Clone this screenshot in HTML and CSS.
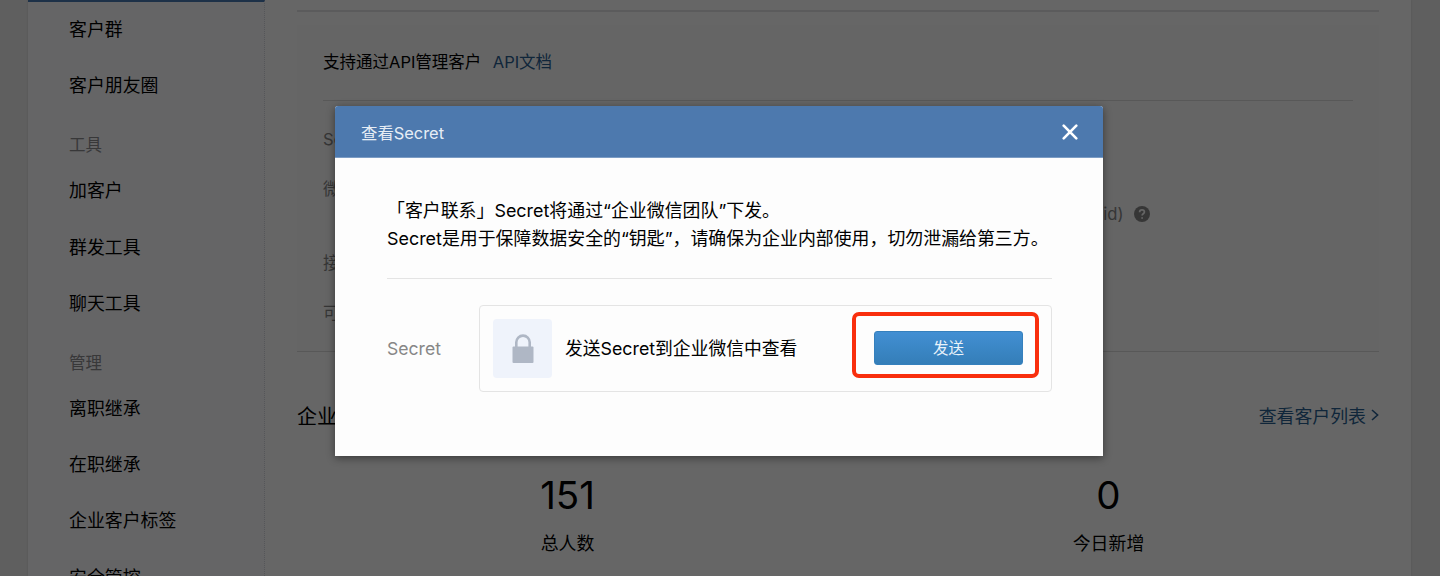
FILE: index.html
```html
<!DOCTYPE html>
<html lang="zh-CN">
<head>
<meta charset="utf-8">
<title>查看Secret</title>
<link rel="stylesheet" href="styles.css">
</head>
<body>
<div class="page">
  <nav class="sidebar">
    <a class="item">客户群</a>
    <a class="item">客户朋友圈</a>
    <h3 class="group">工具</h3>
    <a class="item">加客户</a>
    <a class="item">群发工具</a>
    <a class="item">聊天工具</a>
    <h3 class="group">管理</h3>
    <a class="item">离职继承</a>
    <a class="item">在职继承</a>
    <a class="item">企业客户标签</a>
    <a class="item">安全管控</a>
  </nav>
  <main class="main">
    <section class="panel">
      <div class="panel-head">支持通过API管理客户<a class="link">API文档</a></div>
      <div class="row">Se</div>
      <div class="row row-wechat">微
        <span class="uid">uid)
          <svg class="help" viewBox="0 0 16 16"><circle cx="8" cy="8" r="8"/><path d="M5.6 6.2C5.6 4.7 6.6 3.9 8 3.9s2.4.8 2.4 2.1c0 1.7-2.3 1.8-2.3 3.5"/><path d="M8.1 11.2v1.5"/></svg>
        </span>
      </div>
      <div class="row">接</div>
      <div class="row">可</div>
    </section>
    <header class="stats-head">
      <h2>企业</h2>
      <a class="more">查看客户列表<svg viewBox="0 0 8 12"><path d="M1 1l5.6 5L1 11"/></svg></a>
    </header>
    <section class="stats">
      <div class="stat"><b>151</b><span>总人数</span></div>
      <div class="stat"><b>0</b><span>今日新增</span></div>
    </section>
  </main>
</div>
<div class="mask">
  <div class="dialog">
    <header class="dialog-head">
      <span>查看Secret</span>
      <svg class="close" viewBox="0 0 16 16"><path d="M1.7 1.7l12.6 12.6M14.3 1.7L1.7 14.3"/></svg>
    </header>
    <div class="dialog-body">
      <p class="desc">「客户联系」Secret将通过“企业微信团队”下发。<br>Secret是用于保障数据安全的“钥匙”，请确保为企业内部使用，切勿泄漏给第三方。</p>
      <div class="field">
        <span class="label">Secret</span>
        <div class="card">
          <div class="lock"><svg viewBox="0 0 22 30"><path class="shackle" d="M4.3 13V8.3a6.7 6.7 0 0 1 13.4 0v4.7"/><rect x="0.5" y="12.4" width="21" height="16.6" rx="1"/></svg></div>
          <span class="tip">发送Secret到企业微信中查看</span>
          <div class="mark"><button class="send">发送</button></div>
        </div>
      </div>
    </div>
  </div>
</div>
</body>
</html>
```
FILE: styles.css
```css
* { box-sizing: border-box; }
body {
  margin: 0;
  height: 576px;
  overflow: hidden;
  background: #ededed;
  font-family: Inter, "Noto Sans CJK SC", sans-serif;
  font-size: 16.5px;
  color: #000;
}
h2, h3, p { margin: 0; font-weight: 400; }
.page {
  display: flex;
  width: 1383px;
  height: 576px;
  margin-left: 28px;
  overflow: hidden;
  background: #fff;
  box-shadow: 0 0 2px #ccc;
}
.sidebar {
  flex: none;
  width: 237px;
  background: #fcfcff;
  border-top: 2px solid #4a7ab5;
  border-right: 1px dotted #d4d6de;
}
.item {
  display: block;
  height: 56.3px;
  padding-left: 41px;
  line-height: 56.6px;
  font-size: 17.9px;
}
.group {
  height: 48.7px;
  padding: 13.4px 0 0 41px;
  line-height: 35px;
  font-size: 16.5px;
  color: #8c8c90;
}
.main { flex: 1; margin: 10px 32px 0; border-top: 2px solid #e4e4e6; }
.panel {
  height: 327px;
  margin: 13px 0 38px;
  padding: 0 26px;
  background: #fcfcfc;
  border-bottom: 1px solid #dcdcdc;
}
.panel-head {
  height: 76px;
  margin-bottom: 13px;
  line-height: 75px;
  border-bottom: 1px solid #dcdcdc;
}
.link, .more { color: #2a5f92; }
.link { margin-left: 11.4px; }
.row { height: 50px; line-height: 50px; color: #888; }
.row-wechat { display: flex; height: 74px; }
.uid {
  display: flex;
  align-items: center;
  gap: 10px;
  height: 50px;
  margin: 25px 0 0 754px;
  font-size: 16.6px;
}
.help { width: 16px; height: 16px; fill: #888; }
.help path { fill: none; stroke: #fcfcfc; stroke-width: 1.7; }
.stats-head {
  display: flex;
  align-items: center;
  justify-content: space-between;
  height: 50px;
}
.stats-head h2 { font-size: 20px; }
.more { display: flex; align-items: center; gap: 5px; font-size: 17.9px; }
.more svg { width: 8px; height: 12px; fill: none; stroke: #2a5f92; stroke-width: 1.6; }
.stats { display: flex; margin-top: 31px; }
.stat { flex: 1; display: flex; flex-direction: column; align-items: center; }
.stat b { font-size: 38.5px; line-height: 48px; font-weight: 400; }
.stat span { margin-top: 11px; font-size: 17.9px; line-height: 28px; }
.mask {
  position: absolute;
  inset: 0;
  padding: 106px 0 0 335px;
  background: rgba(0, 0, 0, .6);
}
.dialog {
  width: 768px;
  height: 350px;
  background: #fdfdfd;
  border-radius: 3px 3px 0 0;
  box-shadow: 0 2px 8px rgba(0, 0, 0, .45);
}
.dialog-head {
  display: flex;
  align-items: center;
  justify-content: space-between;
  height: 52px;
  padding: 0 25px 0 26px;
  background: #4d79ae;
  border-bottom: 1px solid #7c9cc4;
  border-radius: 3px 3px 0 0;
  color: #e6edf5;
  font-size: 16.4px;
}
.close { width: 16px; height: 16px; fill: none; stroke: #fff; stroke-width: 2.6; stroke-linecap: round; }
.dialog-body { padding: 39px 51px 0 52px; }
.desc {
  height: 82px;
  border-bottom: 1px solid #e4e4e4;
  font-size: 17.92px;
  line-height: 28px;
  white-space: nowrap;
}
.field { display: flex; align-items: center; margin-top: 26px; }
.label { width: 92px; font-size: 17.6px; color: #878787; }
.card {
  flex: 1;
  display: flex;
  align-items: center;
  height: 87px;
  padding: 0 12px 0 13px;
  border: 1px solid #e4e4e4;
  border-radius: 4px;
}
.lock {
  display: flex;
  align-items: center;
  justify-content: center;
  width: 59px;
  height: 59px;
  background: #eff3fb;
  border-radius: 4px;
}
.lock svg { width: 22px; height: 30px; fill: #afb7c5; }
.lock .shackle { fill: none; stroke: #afb7c5; stroke-width: 2.6; }
.tip { margin: -3px 0 0 13px; font-size: 17.8px; }
.mark {
  display: flex;
  align-items: center;
  justify-content: center;
  width: 187px;
  height: 66px;
  margin: -7px 0 0 auto;
  padding: 6px 0 0 6px;
  border: 4px solid #f92f0d;
  border-radius: 7px;
}
.send {
  width: 149px;
  height: 34px;
  padding: 1px 0 0;
  border: 1px solid #3580bd;
  border-radius: 3px;
  background: linear-gradient(#428fd3, #347eb8);
  color: #e9f3fb;
  font: 15.5px/31px Inter, "Noto Sans CJK SC", sans-serif;
}
```
